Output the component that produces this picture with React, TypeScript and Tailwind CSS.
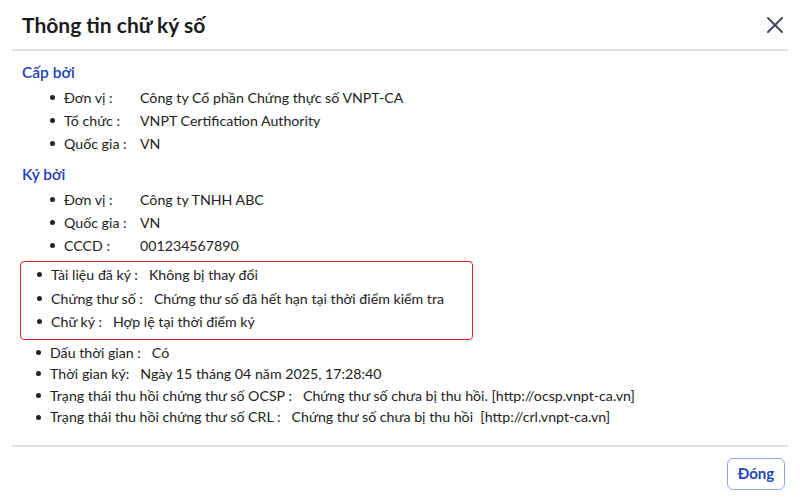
import React from 'react';

type Row = { label: string; value: string };

const capBoi: Row[] = [
  { label: 'Đơn vị :', value: 'Công ty Cổ phần Chứng thực số VNPT-CA' },
  { label: 'Tổ chức :', value: 'VNPT Certification Authority' },
  { label: 'Quốc gia :', value: 'VN' },
];

const kyBoi: Row[] = [
  { label: 'Đơn vị :', value: 'Công ty TNHH ABC' },
  { label: 'Quốc gia :', value: 'VN' },
  { label: 'CCCD :', value: '001234567890' },
];

const checked: Row[] = [
  { label: 'Tài liệu đã ký :', value: 'Không bị thay đổi' },
  { label: 'Chứng thư số :', value: 'Chứng thư số đã hết hạn tại thời điểm kiểm tra' },
  { label: 'Chữ ký :', value: 'Hợp lệ tại thời điểm ký' },
];

const others: Row[] = [
  { label: 'Dấu thời gian :', value: 'Có' },
  { label: 'Thời gian ký:', value: 'Ngày 15 tháng 04 năm 2025, 17:28:40' },
  { label: 'Trạng thái thu hồi chứng thư số OCSP :', value: 'Chứng thư số chưa bị thu hồi. [http://ocsp.vnpt-ca.vn]' },
  { label: 'Trạng thái thu hồi chứng thư số CRL :', value: 'Chứng thư số chưa bị thu hồi  [http://crl.vnpt-ca.vn]' },
];

const Dot = () => <span className="w-[5px] h-[5px] rounded-full bg-[#222] mr-[9px] shrink-0" />;

// dòng có cột nhãn cố định
const GridRow = ({ row }: { row: Row }) => (
  <li className="flex items-center h-[23px]">
    <Dot />
    <span className="w-[76px]">{row.label}</span>
    <span>{row.value}</span>
  </li>
);

// dòng nhãn + giá trị liền nhau
const InlineRow = ({ row, tall }: { row: Row; tall?: boolean }) => (
  <li className={`flex items-center ${tall ? 'h-[23.5px]' : 'h-[21.6px]'}`}>
    <Dot />
    <span className="whitespace-pre">{row.label}</span>
    <span className="ml-[11px] whitespace-pre">{row.value}</span>
  </li>
);

export default function App() {
  return (
    <div
      className="w-[800px] h-[500px] bg-white text-[#222] px-3 flex flex-col"
      style={{ fontFamily: 'Lato, "Noto Sans", sans-serif' }}
    >
      <header className="h-[51px] flex items-center justify-between border-b-[2px] border-[#dde0e6] pl-[10px] pr-[4px] shrink-0">
        <h1 className="text-[21px] font-bold text-[#1b1b1b]">Thông tin chữ ký số</h1>
        <button className="text-[#3d4a5c]" aria-label="Đóng">
          <svg width="18" height="18" viewBox="0 0 18 18" fill="none" stroke="currentColor" strokeWidth="2" strokeLinecap="round">
            <line x1="2" y1="2" x2="16" y2="16" />
            <line x1="16" y1="2" x2="2" y2="16" />
          </svg>
        </button>
      </header>

      <div className="flex-1 text-[14.2px] pl-[8px]">
        <h2 className="mt-[11px] h-[22px] flex items-center text-[15.5px] font-semibold text-[#1a3fb5] pl-[2px]">Cấp bởi</h2>
        <ul className="pl-[30px] mt-[2px]">
          {capBoi.map((r) => (
            <GridRow key={r.label} row={r} />
          ))}
        </ul>
        <h2 className="mt-[9px] h-[22px] flex items-center text-[15.5px] font-semibold text-[#1a3fb5] pl-[2px]">Ký bởi</h2>
        <ul className="pl-[30px] mt-[2px]">
          {kyBoi.map((r) => (
            <GridRow key={r.label} row={r} />
          ))}
        </ul>

        <ul className="mt-[4px] w-[453px] border-[1.5px] border-[#e8272c] rounded-[4px] pl-[16px] pt-[1px] pb-[5px]">
          {checked.map((r) => (
            <InlineRow key={r.label} row={r} tall />
          ))}
        </ul>

        <ul className="pl-[16px] mt-[2px]">
          {others.map((r) => (
            <InlineRow key={r.label} row={r} />
          ))}
        </ul>
      </div>

      <footer className="h-[55px] border-t-[2px] border-[#dde0e6] flex items-center justify-end pr-[3px] shrink-0">
        <button className="h-[32px] w-[58px] rounded-[6px] border border-[#8da6de] text-[#1e45b8] font-bold text-[15px]">
          Đóng
        </button>
      </footer>
    </div>
  );
}
